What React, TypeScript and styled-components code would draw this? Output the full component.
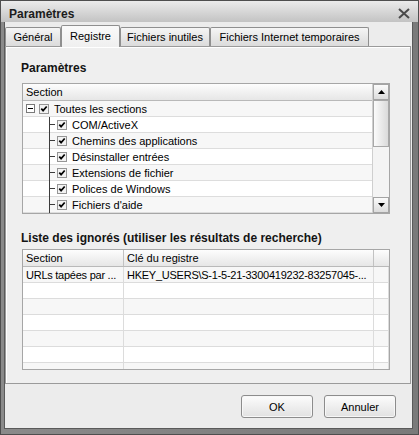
import { FunctionComponent } from "react";
import styled, { createGlobalStyle } from "styled-components";

const GlobalStyle = createGlobalStyle`
  html, body {
    margin: 0;
    padding: 0;
    background: #ffffff;
  }
  body {
    font-family: "Liberation Sans", Arial, sans-serif;
    font-size: 11px;
    color: #000000;
  }
`;

const WindowRoot = styled.div`
  width: 419px;
  height: 435px;
  box-sizing: border-box;
  display: flex;
  flex-direction: column;
  padding: 0 5px 5px 3px;
  background: linear-gradient(90deg, #8a8a8a, #7a7a7a);
  border: 1px solid #4e4e4e;
  font-family: "Liberation Sans", Arial, sans-serif;
  font-size: 11px;
  color: #000000;
`;
const TitleBar = styled.div`
  margin: 0 -5px 0 -3px;
  height: 21px;
  box-sizing: border-box;
  padding: 4px 8px 0 8px;
  display: flex;
  align-items: center;
  justify-content: space-between;
  background: linear-gradient(#ebebeb, #c3c3c3);
`;
const Title = styled.b`
  font-size: 12px;
  line-height: 14px;
  color: #1c1c1c;
`;
const Client = styled.div`
  flex: 1;
  display: flex;
  flex-direction: column;
  background: #ececec;
  border: 1px solid #5a5a5a;
  border-top: none;
`;
const TabStrip = styled.div`
  height: 24px;
  box-sizing: border-box;
  display: flex;
  align-items: flex-end;
`;
const Tab = styled.div<{ $active?: boolean; $width: number }>`
  position: relative;
  z-index: ${(p) => (p.$active ? 2 : 0)};
  width: ${(p) => p.$width}px;
  height: ${(p) => (p.$active ? 22 : 19)}px;
  margin-bottom: ${(p) => (p.$active ? -1 : 0)}px;
  box-sizing: border-box;
  display: flex;
  align-items: center;
  justify-content: center;
  border: 1px solid #8f8f8f;
  border-bottom: none;
  border-radius: 2px 2px 0 0;
  padding-bottom: ${(p) => (p.$active ? 2 : 0)}px;
  background: ${(p) =>
    p.$active
      ? "linear-gradient(#fafafa, #efefef)"
      : "linear-gradient(#f5f5f5, #dbdbdb)"};
  white-space: nowrap;
`;
const Panel = styled.div`
  height: 338px;
  box-sizing: border-box;
  margin-right: 1px;
  border: 1px solid #9a9a9a;
  background: #efefef;
  box-shadow: inset 1px 1px 0 #ffffff;
  padding: 14px 20px 0 16px;
  display: flex;
  flex-direction: column;
`;
const SectionTitle = styled.div<{ $gap: number }>`
  margin-top: ${(p) => p.$gap}px;
  margin-left: -1px;
  font-size: 12px;
  line-height: 14px;
  font-weight: bold;
  color: #141414;
  white-space: nowrap;
`;
const TreeGrid = styled.div`
  margin-top: 8px;
  height: 131px;
  box-sizing: border-box;
  border: 1px solid #a6a6a6;
  background: #ffffff;
  display: flex;
`;
const ListArea = styled.div`
  flex: 1;
  min-width: 0;
  display: flex;
  flex-direction: column;
`;
const HeaderRow = styled.div`
  height: 17px;
  flex-shrink: 0;
  box-sizing: border-box;
  border-bottom: 1px solid #b9b9b9;
  background: linear-gradient(#fdfdfd, #e6e6e6);
  display: flex;
`;
const HeaderCell = styled.div<{ $width?: number; $last?: boolean }>`
  ${(p) => (p.$width ? `width: ${p.$width}px;` : "flex: 1;")}
  box-sizing: border-box;
  padding-left: 3px;
  display: flex;
  align-items: center;
  border-right: ${(p) => (p.$last ? "none" : "1px solid #c2c2c2")};
  white-space: nowrap;
`;
const TreeRow = styled.div<{ $alt: boolean; $indent: number }>`
  height: 16px;
  flex-shrink: 0;
  box-sizing: border-box;
  border-bottom: 1px solid #dddddd;
  background: ${(p) => (p.$alt ? "#f7f7f7" : "#ffffff")};
  display: flex;
  align-items: center;
  padding-left: ${(p) => p.$indent}px;
  white-space: nowrap;
`;
const Expander = styled.svg`
  flex-shrink: 0;
  margin-right: 4px;
`;
const Branch = styled.svg`
  flex-shrink: 0;
  margin-right: 2px;
  align-self: stretch;
`;
const CheckBox = styled.svg`
  flex-shrink: 0;
  margin-right: 5px;
`;
const ScrollBar = styled.div`
  width: 16px;
  flex-shrink: 0;
  display: flex;
  flex-direction: column;
  border-left: 1px solid #cfcfcf;
  background: #f4f4f4;
`;
const ScrollButton = styled.div`
  height: 16px;
  flex-shrink: 0;
  box-sizing: border-box;
  border: 1px solid #a4a4a4;
  background: linear-gradient(#fbfbfb, #dcdcdc);
  display: flex;
  align-items: center;
  justify-content: center;
`;
const Thumb = styled.div`
  height: 47px;
  flex-shrink: 0;
  box-sizing: border-box;
  border: 1px solid #a8a8a8;
  background: linear-gradient(90deg, #fbfbfb, #dadada);
`;
const Track = styled.div`
  flex: 1;
`;
const IgnoreGrid = styled.div`
  margin-top: 4px;
  height: 121px;
  box-sizing: border-box;
  border: 1px solid #a6a6a6;
  background: #ffffff;
  overflow: hidden;
  display: flex;
  flex-direction: column;
`;
const DataRow = styled.div<{ $alt: boolean }>`
  height: 16px;
  flex-shrink: 0;
  display: flex;
  background: ${(p) => (p.$alt ? "#f7f7f7" : "#ffffff")};
`;
const DataCell = styled.div<{ $width?: number }>`
  ${(p) => (p.$width ? `width: ${p.$width}px;` : "flex: 1;")}
  box-sizing: border-box;
  padding-left: 3px;
  border-right: 1px solid #dcdcdc;
  border-bottom: 1px solid #dcdcdc;
  display: flex;
  align-items: center;
  overflow: hidden;
  white-space: nowrap;
  letter-spacing: -0.25px;
`;
const Footer = styled.div`
  flex: 1;
  display: flex;
  justify-content: flex-end;
  align-items: flex-start;
  gap: 11px;
  padding: 11px 16px 0 0;
`;
const Button = styled.button`
  width: 72px;
  height: 23px;
  box-sizing: border-box;
  border: 1px solid #8c8c8c;
  border-radius: 3px;
  background: linear-gradient(#fcfcfc, #e1e1e1);
  box-shadow: inset 0 0 0 1px #f7f7f7;
  font-family: "Liberation Sans", Arial, sans-serif;
  font-size: 11px;
  color: #000000;
  padding: 0;
`;

const CloseIcon = () => (
  <svg width="12" height="11" viewBox="0 0 12 11">
    <path d="M1 1L11 10M11 1L1 10" stroke="#4b4b4b" strokeWidth="2" />
  </svg>
);

const Check = () => (
  <CheckBox width="10" height="10" viewBox="0 0 10 10">
    <rect x="0.5" y="0.5" width="9" height="9" fill="#f2f2f2" stroke="#959595" />
    <path d="M2.3 4.6L4.1 6.6L7.7 2.5" fill="none" stroke="#000" strokeWidth="1.7" />
  </CheckBox>
);

const Arrow = ({ down }: { down?: boolean }) => (
  <svg width="7" height="4" viewBox="0 0 7 4">
    <path d={down ? "M0 0H7L3.5 4Z" : "M0 4H7L3.5 0Z"} fill="#000" />
  </svg>
);

const sections = [
  "COM/ActiveX",
  "Chemins des applications",
  "Désinstaller entrées",
  "Extensions de fichier",
  "Polices de Windows",
  "Fichiers d'aide",
];

const ignored = [
  ["URLs tapées par ...", "HKEY_USERS\\S-1-5-21-3300419232-83257045-..."],
  ["", ""],
  ["", ""],
  ["", ""],
  ["", ""],
  ["", ""],
  ["", ""],
];

const App: FunctionComponent = () => {
  return (
    <>
      <GlobalStyle />
      <WindowRoot>
        <TitleBar>
          <Title>Paramètres</Title>
          <CloseIcon />
        </TitleBar>
        <Client>
          <TabStrip>
            <Tab $width={56}>Général</Tab>
            <Tab $width={59} $active>
              Registre
            </Tab>
            <Tab $width={90}>Fichiers inutiles</Tab>
            <Tab $width={159}>Fichiers Internet temporaires</Tab>
          </TabStrip>
          <Panel>
            <SectionTitle $gap={0}>Paramètres</SectionTitle>
            <TreeGrid>
              <ListArea>
                <HeaderRow>
                  <HeaderCell $last>Section</HeaderCell>
                </HeaderRow>
                <TreeRow $alt $indent={3}>
                  <Expander width="9" height="9" viewBox="0 0 9 9">
                    <rect x="0.5" y="0.5" width="8" height="8" fill="#fff" stroke="#7a7a7a" />
                    <path d="M2 4.5H7" stroke="#000" />
                  </Expander>
                  <Check />
                  Toutes les sections
                </TreeRow>
                {sections.map((name, i) => (
                  <TreeRow key={name} $alt={i % 2 === 1} $indent={26}>
                    <Branch width="6" height="16" viewBox="0 0 6 16">
                      <path d="M0.5 0V16M0.5 7.5H6" stroke="#3c3c3c" />
                    </Branch>
                    <Check />
                    {name}
                  </TreeRow>
                ))}
              </ListArea>
              <ScrollBar>
                <ScrollButton>
                  <Arrow />
                </ScrollButton>
                <Thumb />
                <Track />
                <ScrollButton>
                  <Arrow down />
                </ScrollButton>
              </ScrollBar>
            </TreeGrid>
            <SectionTitle $gap={17}>
              Liste des ignorés (utiliser les résultats de recherche)
            </SectionTitle>
            <IgnoreGrid>
              <HeaderRow>
                <HeaderCell $width={101}>Section</HeaderCell>
                <HeaderCell $width={250}>Clé du registre</HeaderCell>
                <HeaderCell $last />
              </HeaderRow>
              {ignored.map(([section, key], i) => (
                <DataRow key={i} $alt={i % 2 === 0}>
                  <DataCell $width={101}>{section}</DataCell>
                  <DataCell $width={250}>{key}</DataCell>
                  <DataCell />
                </DataRow>
              ))}
            </IgnoreGrid>
          </Panel>
          <Footer>
            <Button>OK</Button>
            <Button>Annuler</Button>
          </Footer>
        </Client>
      </WindowRoot>
    </>
  );
};

export default App;
